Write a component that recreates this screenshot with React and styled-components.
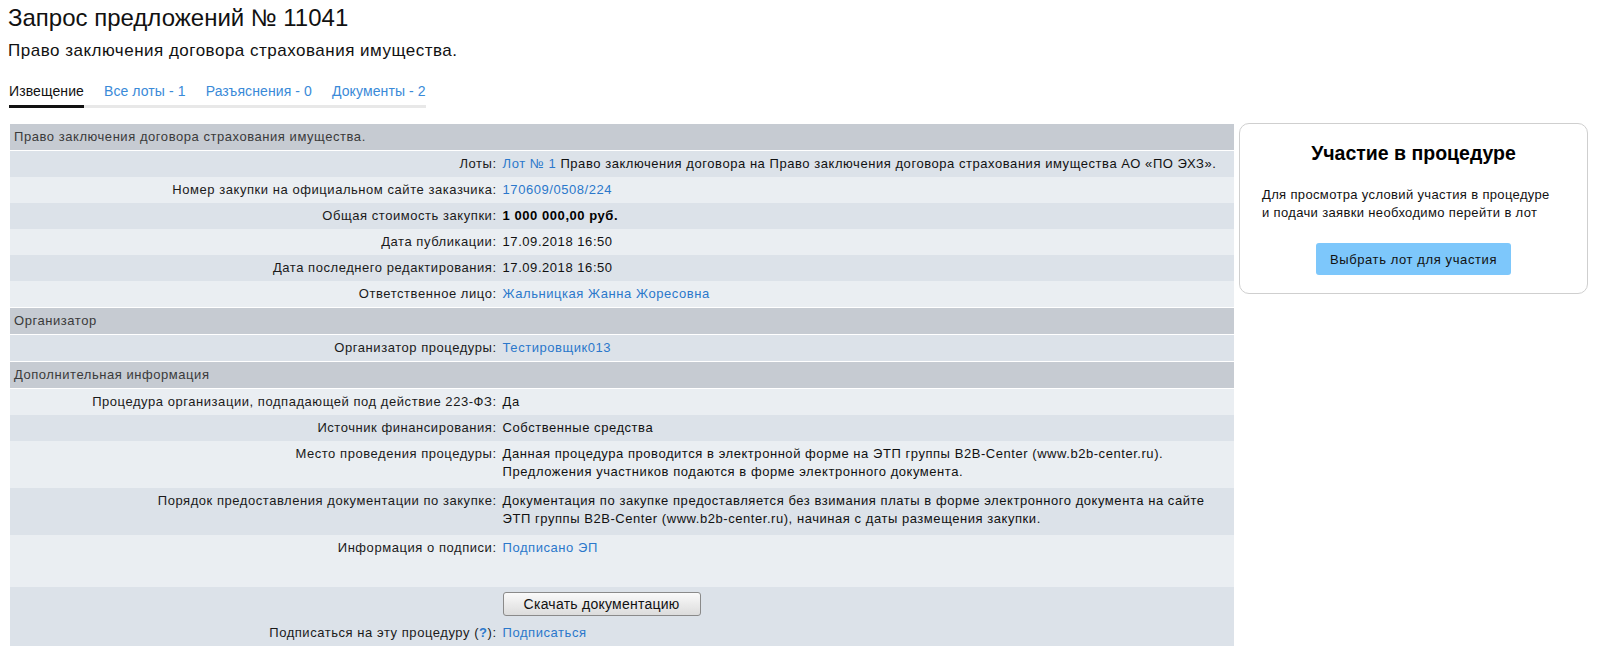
import styled, { createGlobalStyle } from "styled-components"

const Global = createGlobalStyle`
  body {
    margin: 0;
    background: #fff;
    font-family: "Liberation Sans", Arial, sans-serif;
    color: #222;
  }
  a { text-decoration: none; }
`

const Page = styled.div`
  padding: 0 8px 8px;
`

const Title = styled.h1`
  margin: 6px 0 0;
  font-size: 24px;
  font-weight: 400;
  line-height: 24px;
  color: #111;
`

const Subtitle = styled.h2`
  margin: 11px 0 0;
  font-size: 17px;
  font-weight: 400;
  line-height: 20px;
  letter-spacing: 0.5px;
  color: #111;
`

const Tabs = styled.div`
  display: inline-flex;
  gap: 20px;
  margin: 21px 0 0 1px;
  border-bottom: 3px solid #e8e8e8;
`

const Tab = styled.a`
  font-size: 14px;
  line-height: 18px;
  letter-spacing: 0.1px;
  padding-bottom: 5px;
  margin-bottom: -3px;
  color: ${p => (p.$active ? "#111" : "#3a8ad8")};
  border-bottom: 3px solid ${p => (p.$active ? "#111" : "transparent")};
  cursor: pointer;
`

const Main = styled.div`
  display: flex;
  align-items: flex-start;
  gap: 5px;
  margin: 16px 3px 0 2px;
`

const Table = styled.table`
  flex: 1;
  border-collapse: collapse;
  font-size: 13px;
  line-height: 18px;
  letter-spacing: 0.55px;
`

const SectionCell = styled.td`
  background: #c6cbd2;
  color: #3a3a3a;
  padding: 4px 4px;
  border-top: 1px solid #fff;
  border-bottom: 1px solid #fff;
  tr:first-child > & {
    border-top: none;
  }
`

const Row = styled.tr`
  background: ${p => (p.$dark ? "#dce2e9" : "#eaeef2")};
`

const Label = styled.td`
  width: 40%;
  text-align: right;
  vertical-align: top;
  padding: 4px 3px ${p => p.$pb || "4px"} 4px;
  color: #1a1a1a;
`

const Value = styled.td`
  vertical-align: top;
  padding: ${p => p.$pt || "4px"} 4px ${p => p.$pb || "4px"} 3px;
  color: #111;
`

const Link = styled.a`
  color: #2b78cb;
  cursor: pointer;
`

const Strong = styled.b`
  color: #000;
`

const Help = styled.a`
  color: #2b78cb;
  font-weight: 700;
`

const DownloadButton = styled.button`
  display: block;
  font-family: inherit;
  font-size: 14px;
  letter-spacing: 0.25px;
  color: #111;
  width: 198px;
  height: 24px;
  border: 1px solid #8a8a8a;
  border-radius: 3px;
  background: linear-gradient(#fafafa, #dcdcdc);
  cursor: pointer;
`

const Card = styled.aside`
  width: 349px;
  box-sizing: border-box;
  margin-top: -1px;
  padding: 17px 22px 18px;
  border: 1px solid #cfcfcf;
  border-radius: 10px;
  background: #fff;
  display: flex;
  flex-direction: column;
  align-items: center;
`

const CardTitle = styled.h3`
  margin: 0;
  font-size: 19.5px;
  line-height: 24px;
  font-weight: 700;
  color: #000;
`

const CardText = styled.p`
  align-self: stretch;
  margin: 21px 0 0;
  font-size: 13px;
  line-height: 18px;
  letter-spacing: 0.35px;
  white-space: nowrap;
  color: #111;
`

const ChooseButton = styled.button`
  margin-top: 21px;
  width: 195px;
  height: 32px;
  border: none;
  border-radius: 3px;
  background: #7dc7fb;
  font-family: inherit;
  font-size: 13px;
  letter-spacing: 0.6px;
  color: #111;
  cursor: pointer;
`

const Section = ({ children }) => (
  <tr>
    <SectionCell colSpan={2}>{children}</SectionCell>
  </tr>
)

export default function App() {
  return (
    <Page>
      <Global />
      <Title>Запрос предложений № 11041</Title>
      <Subtitle>Право заключения договора страхования имущества.</Subtitle>
      <Tabs>
        <Tab $active>Извещение</Tab>
        <Tab>Все лоты - 1</Tab>
        <Tab>Разъяснения - 0</Tab>
        <Tab>Документы - 2</Tab>
      </Tabs>
      <Main>
        <Table>
          <tbody>
            <Section>Право заключения договора страхования имущества.</Section>
            <Row $dark>
              <Label>Лоты:</Label>
              <Value>
                <Link>Лот № 1</Link> Право заключения договора на Право заключения договора страхования имущества АО «ПО ЭХЗ».
              </Value>
            </Row>
            <Row>
              <Label>Номер закупки на официальном сайте заказчика:</Label>
              <Value><Link>170609/0508/224</Link></Value>
            </Row>
            <Row $dark>
              <Label>Общая стоимость закупки:</Label>
              <Value><Strong>1 000 000,00 руб.</Strong></Value>
            </Row>
            <Row>
              <Label>Дата публикации:</Label>
              <Value>17.09.2018 16:50</Value>
            </Row>
            <Row $dark>
              <Label>Дата последнего редактирования:</Label>
              <Value>17.09.2018 16:50</Value>
            </Row>
            <Row>
              <Label>Ответственное лицо:</Label>
              <Value><Link>Жальницкая Жанна Жоресовна</Link></Value>
            </Row>
            <Section>Организатор</Section>
            <Row $dark>
              <Label>Организатор процедуры:</Label>
              <Value><Link>Тестировщик013</Link></Value>
            </Row>
            <Section>Дополнительная информация</Section>
            <Row>
              <Label>Процедура организации, подпадающей под действие 223-ФЗ:</Label>
              <Value>Да</Value>
            </Row>
            <Row $dark>
              <Label>Источник финансирования:</Label>
              <Value>Собственные средства</Value>
            </Row>
            <Row>
              <Label>Место проведения процедуры:</Label>
              <Value $pb="7px">
                Данная процедура проводится в электронной форме на ЭТП группы B2B-Center (www.b2b-center.ru).
                <br />
                Предложения участников подаются в форме электронного документа.
              </Value>
            </Row>
            <Row $dark>
              <Label>Порядок предоставления документации по закупке:</Label>
              <Value $pb="7px">
                Документация по закупке предоставляется без взимания платы в форме электронного документа на сайте
                <br />
                ЭТП группы B2B-Center (www.b2b-center.ru), начиная с даты размещения закупки.
              </Value>
            </Row>
            <Row>
              <Label $pb="30px">Информация о подписи:</Label>
              <Value><Link>Подписано ЭП</Link></Value>
            </Row>
            <Row $dark>
              <Label />
              <Value $pt="5px">
                <DownloadButton>Скачать документацию</DownloadButton>
              </Value>
            </Row>
            <Row $dark>
              <Label>
                Подписаться на эту процедуру (<Help>?</Help>):
              </Label>
              <Value><Link>Подписаться</Link></Value>
            </Row>
          </tbody>
        </Table>
        <Card>
          <CardTitle>Участие в процедуре</CardTitle>
          <CardText>
            Для просмотра условий участия в процедуре
            <br />
            и подачи заявки необходимо перейти в лот
          </CardText>
          <ChooseButton>Выбрать лот для участия</ChooseButton>
        </Card>
      </Main>
    </Page>
  )
}
